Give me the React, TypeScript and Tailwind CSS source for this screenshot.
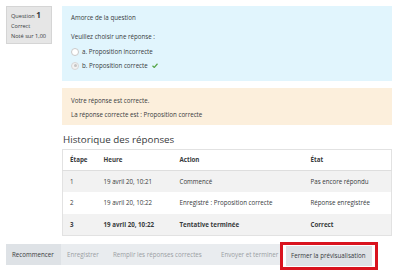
export default function App() {
  const rows = [
    { step: '1', time: '19 avril 20, 10:21', action: 'Commencé', state: 'Pas encore répondu', bold: false },
    { step: '2', time: '19 avril 20, 10:22', action: 'Enregistré : Proposition correcte', state: 'Réponse enregistrée', bold: false },
    { step: '3', time: '19 avril 20, 10:22', action: 'Tentative terminée', state: 'Correct', bold: true },
  ];

  return (
    <div className="w-[400px] h-[274px] bg-white text-[#373a3c] text-[6.2px] overflow-hidden" style={{ fontFamily: '"Open Sans", sans-serif' }}>
      <div className="flex gap-[10px] pl-[6px] pt-[6px]">
        <div className="w-[46px] h-[38px] shrink-0 bg-[#e6e6e6] border border-[#d5d5d5] px-[4px] pt-[3px] leading-[10px] text-[5.6px]">
          <div>
            Question <span className="text-[8px] font-bold">1</span>
          </div>
          <div>Correct</div>
          <div>Noté sur 1,00</div>
        </div>

        <div className="w-[330px] flex flex-col">
          <div className="h-[75px] bg-[#e1f5fd] px-[9px] pt-[7px]">
            <p>Amorce de la question</p>
            <p className="mt-[10px]">Veuillez choisir une réponse :</p>
            <div className="mt-[3px] flex items-center gap-[3px] h-[14px]">
              <span className="w-[8px] h-[8px] rounded-full bg-white border border-[#c9c9c9]" />
              <span>a. Proposition incorrecte</span>
            </div>
            <div className="flex items-center gap-[3px] h-[14px]">
              <span className="w-[8px] h-[8px] rounded-full bg-[#f2f2f2] border border-[#d6d6d6] flex items-center justify-center">
                <span className="w-[3px] h-[3px] rounded-full bg-[#c4c4c4]" />
              </span>
              <span>b. Proposition correcte</span>
              <svg width="6" height="5" viewBox="0 0 12 10" className="ml-[1px]">
                <path d="M1 5.5 L4.5 9 L11 1.5" fill="none" stroke="#57a64a" strokeWidth="2.4" />
              </svg>
            </div>
          </div>

          <div className="mt-[7px] h-[37px] bg-[#fcefdc] px-[9px] pt-[6px] leading-[14px]">
            <p>Votre réponse est correcte.</p>
            <p>La réponse correcte est : Proposition correcte</p>
          </div>

          <h3 className="mt-[8px] text-[9.8px] leading-[14px] pl-[1px]">Historique des réponses</h3>

          <table className="mt-[2px] w-full border border-[#e2e2e2] border-collapse text-left">
            <thead>
              <tr className="h-[21px] border-b border-[#dedede] font-bold">
                <th className="w-[34px] pl-[7px]">Étape</th>
                <th className="w-[76px] pl-[7px]">Heure</th>
                <th className="w-[131px] pl-[7px]">Action</th>
                <th className="pl-[7px]">État</th>
              </tr>
            </thead>
            <tbody>
              {rows.map((r, i) => (
                <tr key={r.step} className={(i % 2 === 0 ? 'bg-[#f2f2f2] ' : 'bg-white ') + (r.bold ? 'font-bold h-[22px]' : 'h-[21.5px]')}>
                  <td className="pl-[7px]">{r.step}</td>
                  <td className="pl-[7px]">{r.time}</td>
                  <td className="pl-[7px]">{r.action}</td>
                  <td className="pl-[7px]">{r.state}</td>
                </tr>
              ))}
            </tbody>
          </table>
        </div>
      </div>

      <div className="mt-[6px] ml-[6px] flex items-start">
        <div className="w-[55px] mt-[2px] h-[21px] flex items-center bg-[#dee2e6] px-[6px]">Recommencer</div>
        <div className="w-[45px] mt-[2px] h-[21px] flex items-center bg-[#e9ecef] text-[#9a9ea3] px-[6px]">Enregistrer</div>
        <div className="w-[108px] mt-[2px] h-[21px] flex items-center bg-[#e9ecef] text-[#9a9ea3] px-[7px] whitespace-nowrap">Remplir les réponses correctes</div>
        <div className="w-[66px] mt-[2px] h-[21px] flex items-center bg-[#e9ecef] text-[#9a9ea3] pl-[7px] whitespace-nowrap">Envoyer et terminer</div>
        <div className="w-[98px] h-[28px] border-[3px] border-[#d9131e] px-[3px] pt-[1px]">
          <div className="h-[20px] flex items-center bg-[#dee2e6] px-[5px] whitespace-nowrap">Fermer la prévisualisation</div>
        </div>
      </div>
    </div>
  );
}
